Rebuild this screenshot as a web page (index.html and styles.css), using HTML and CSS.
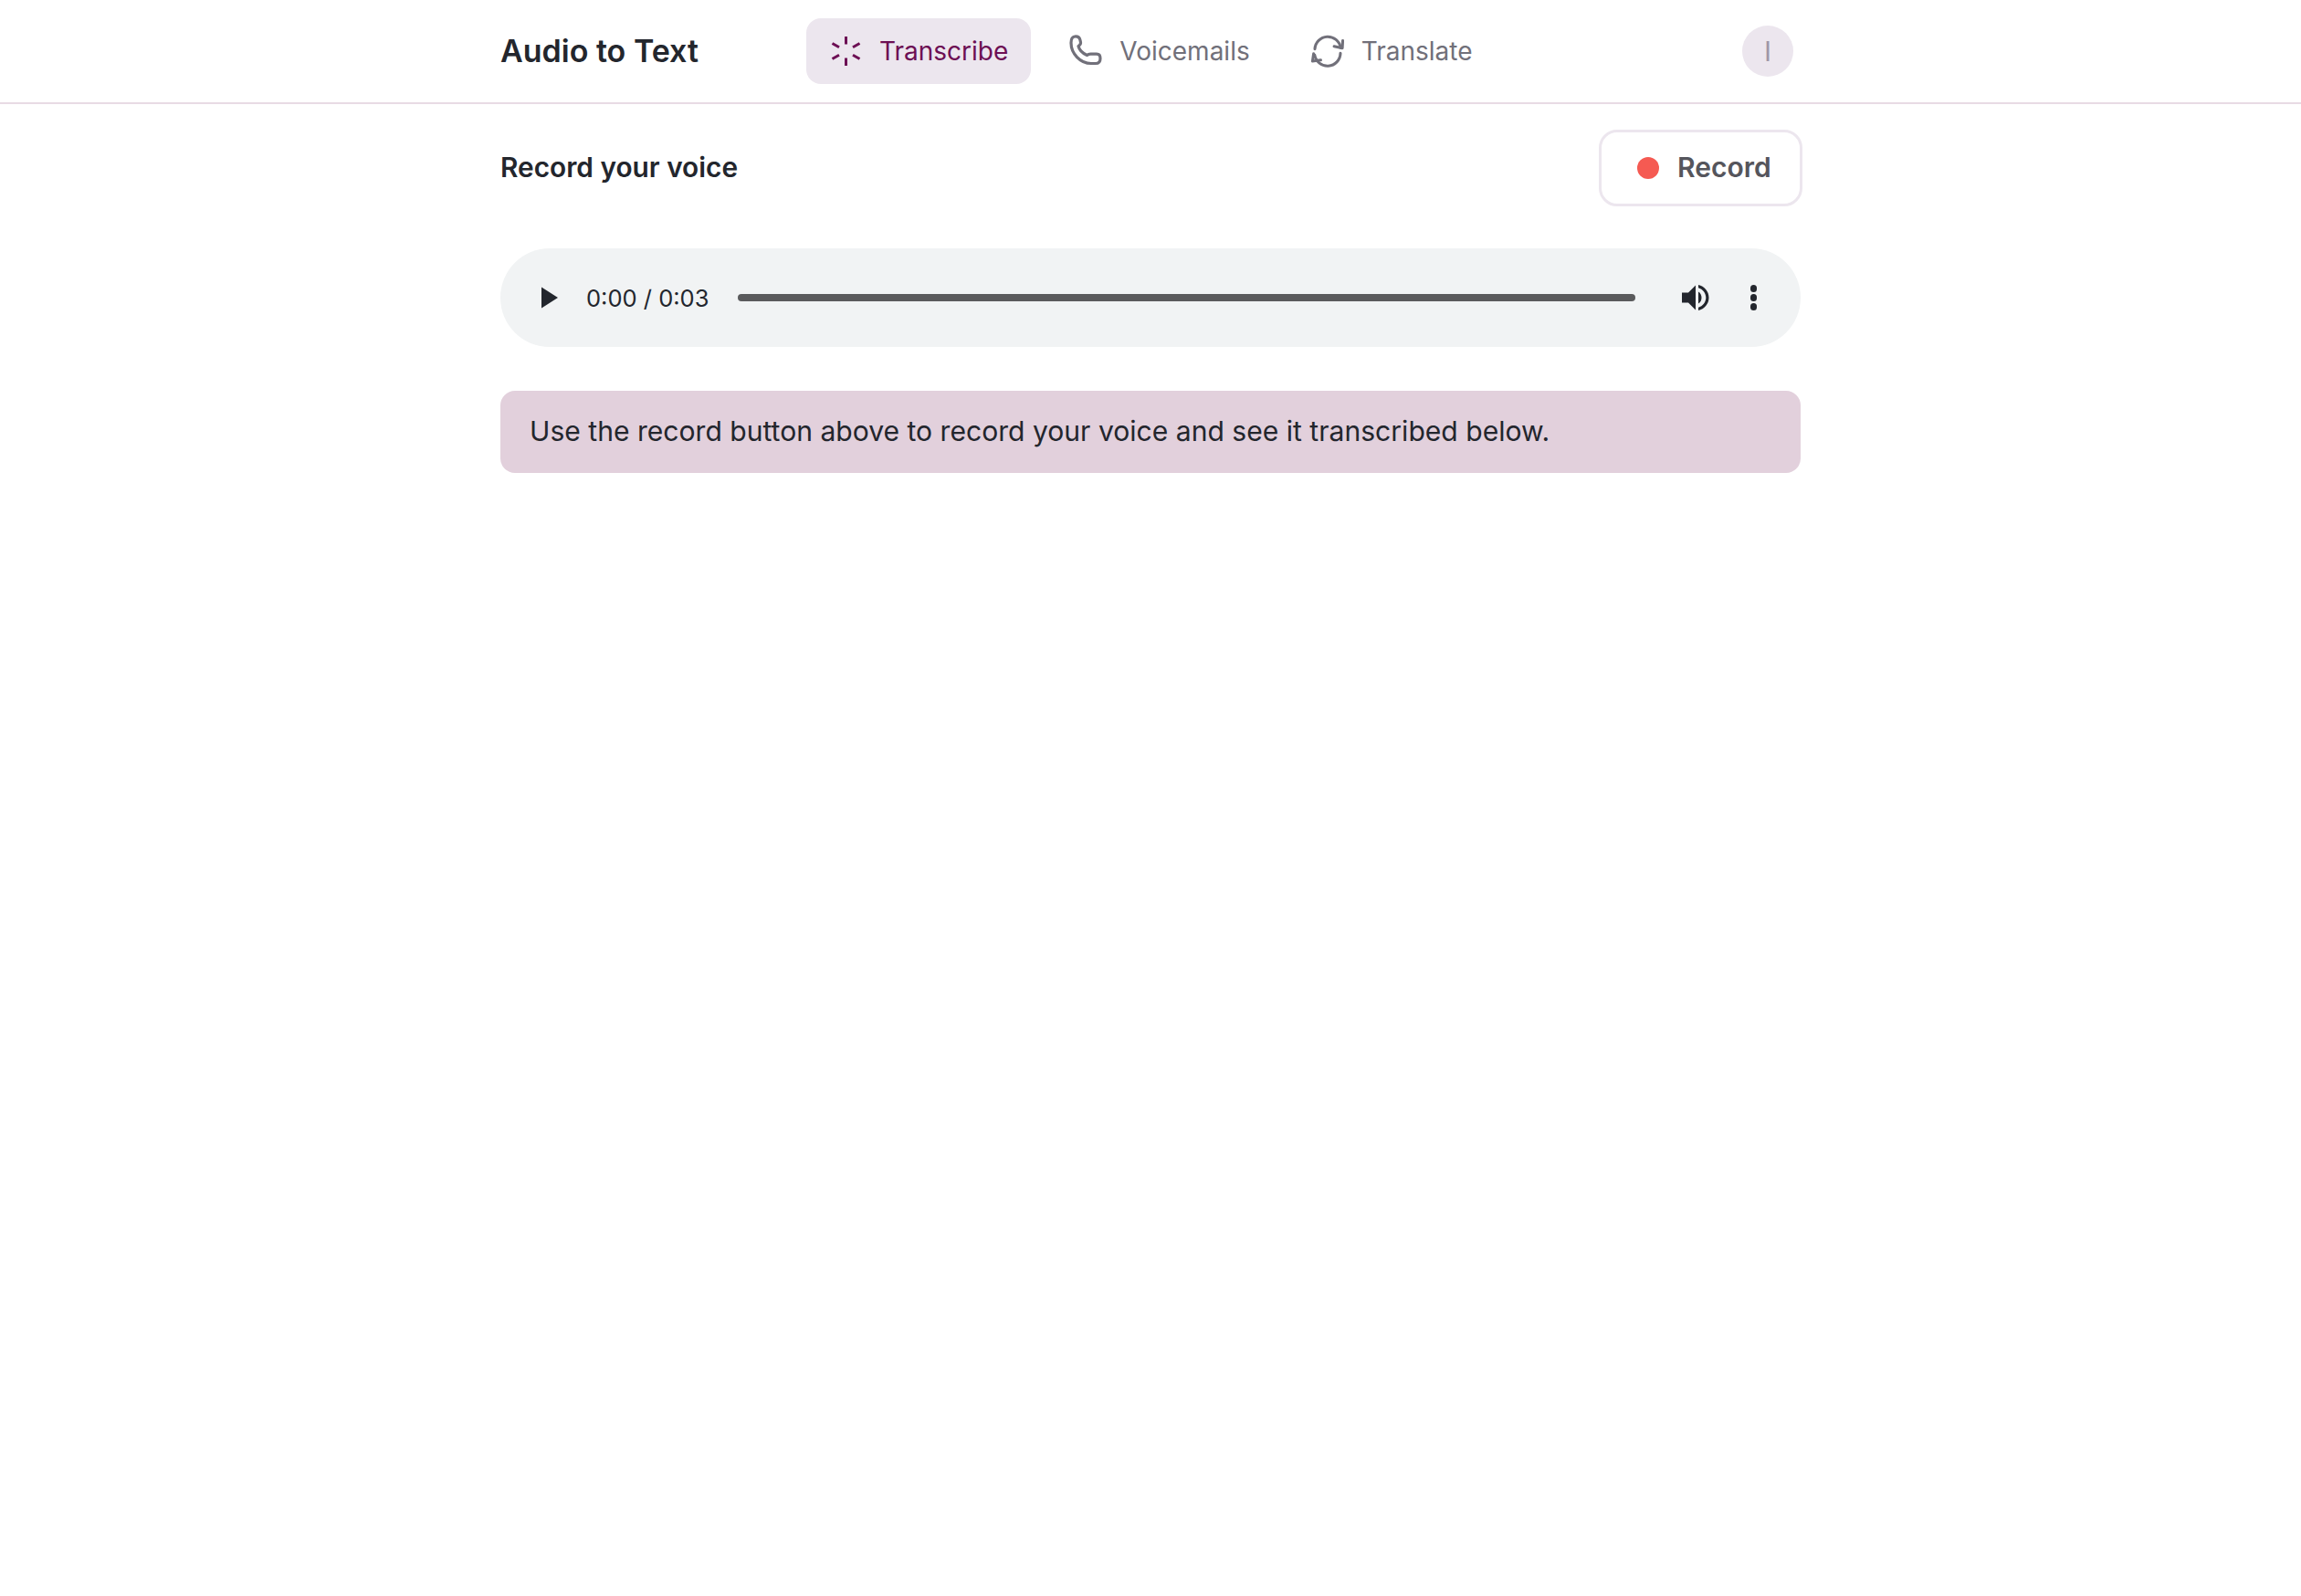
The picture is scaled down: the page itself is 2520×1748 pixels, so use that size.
FILE: index.html
```html
<!DOCTYPE html>
<html lang="en">
<head>
  <meta charset="UTF-8">
  <title>Audio to Text</title>
  <link rel="stylesheet" href="styles.css">
</head>
<body>

  <header class="topbar">
    <div class="topbar-inner">
      <div class="brand">Audio to Text</div>
      <nav class="nav">
        <a class="nav-item active">
          <svg class="nav-icon" viewBox="0 0 36 36" fill="none" stroke="currentColor" stroke-width="3">
            <path d="M18.500 2v8.500M18.500 25.500v8.500M3.500 9.500l7.500 4.300M26 22.200l7.500 4.300M3.500 26.500l7.500-4.300M26 13.800l7.500-4.300"/>
          </svg>
          <span>Transcribe</span>
        </a>
        <a class="nav-item">
          <svg class="nav-icon" viewBox="0 0 36 36" fill="none" stroke="currentColor" stroke-width="3.200" stroke-linejoin="round">
            <path d="M2 9C2 4.500 3.500 1.800 7 1.800C10 1.800 11.500 3.500 12 6L12.500 8.500C12.800 10.500 11.500 11.500 10 12.500C11 16.500 15 20.500 19.500 22.500C21 21 22.500 20.800 25 21.200H30C33 21.200 34 23.500 34 26C34 29.500 32.500 31.500 29 31.500H24C12 31.500 2 20.500 2 9Z"/>
          </svg>
          <span>Voicemails</span>
        </a>
        <a class="nav-item">
          <svg class="nav-icon" viewBox="0 0 38 36" fill="none" stroke="currentColor" stroke-width="3.200" stroke-linecap="round" stroke-linejoin="round">
            <path d="M4.200 15.500A15 15 0 0 1 34 14"/>
            <path d="M36.500 5.800L36 14.500L26.500 12.500"/>
            <path d="M33.800 20.500A15 15 0 0 1 4 22.500"/>
            <path d="M2.800 21L1.500 29.500L11 28.300"/>
          </svg>
          <span>Translate</span>
        </a>
      </nav>
      <div class="avatar">I</div>
    </div>
  </header>

  <main class="content">
    <div class="record-row">
      <h2 class="record-title">Record your voice</h2>
      <button class="btn-record"><span class="record-dot"></span><span class="record-label">Record</span></button>
    </div>

    <div class="player">
      <svg class="play-icon" viewBox="0 0 18 24"><path d="M0 0.500L18 12L0 23.500Z"/></svg>
      <span class="player-time">0:00 / 0:03</span>
      <div class="player-track"></div>
      <svg class="volume-icon" viewBox="0 0 30 30">
        <path d="M0 9.500H7L15 1.500V28.500L7 20.500H0Z"/>
        <path d="M18 8.500C20.500 10 21.500 12.500 21.500 15C21.500 17.500 20.500 20 18 21.500Z"/>
        <path d="M18 1C24.500 2.500 29.500 8 29.500 15C29.500 22 24.500 27.500 18 29V25.800C22.800 24.300 26.300 20 26.300 15C26.300 10 22.800 5.700 18 4.200Z"/>
      </svg>
      <div class="player-more"><i></i><i></i><i></i></div>
    </div>

    <div class="notice">Use the record button above to record your voice and see it transcribed below.</div>
  </main>

</body>
</html>
```

FILE: styles.css
```css
* {
  box-sizing: border-box;
}
body {
  margin: 0;
  background: #fff;
  color: #23262d;
  font-family: Inter, "Liberation Sans", sans-serif;
}
.topbar {
  height: 114px;
  border-bottom: 2px solid #e8dbe4;
}
.topbar-inner {
  width: 1424px;
  height: 112px;
  margin: 0 auto;
  display: flex;
  align-items: center;
}
.brand {
  width: 335px;
  padding-bottom: 1px;
  font-size: 34px;
  font-weight: 600;
}
.nav {
  display: flex;
  gap: 17px;
}
.nav-item {
  height: 72px;
  padding: 0 25px;
  display: flex;
  align-items: center;
  gap: 19px;
  border-radius: 16px;
  color: #71707a;
  font-size: 28px;
}
.nav-item.active {
  background: #ece6ee;
  color: #6d0f54;
}
.nav-icon {
  width: 36px;
  height: 36px;
  flex: none;
}
.avatar {
  width: 56px;
  height: 56px;
  margin-left: auto;
  margin-right: 8px;
  display: flex;
  align-items: center;
  justify-content: center;
  border-radius: 50%;
  background: #ece6ee;
  color: #a096a6;
  font-size: 30px;
}
.content {
  width: 1424px;
  margin: 0 auto;
  padding-top: 28px;
}
.record-row {
  display: flex;
  align-items: center;
  justify-content: space-between;
  margin-bottom: 46px;
}
.record-title {
  margin: 0 0 2px;
  font-size: 29.800px;
  font-weight: 600;
}
.btn-record {
  width: 223px;
  height: 84px;
  margin-right: -2px;
  padding: 0 0 0 39px;
  display: flex;
  align-items: center;
  gap: 20px;
  background: #fff;
  border: 3px solid #ece6ee;
  border-radius: 20px;
  color: #55555c;
  font-family: inherit;
  font-size: 30px;
  font-weight: 600;
}
.record-label {
  padding-bottom: 2px;
}
.record-dot {
  width: 24px;
  height: 24px;
  border-radius: 50%;
  background: #f55a52;
}
.player {
  height: 108px;
  padding: 0 48px 0 45px;
  display: flex;
  align-items: center;
  background: #f1f3f4;
  border-radius: 54px;
}
.play-icon {
  width: 18px;
  height: 24px;
  fill: #23262d;
}
.player-time {
  margin-left: 31px;
  font-size: 25.500px;
}
.player-track {
  flex: 1;
  height: 8px;
  margin: 0 51px 0 32px;
  background: #5a5a5c;
  border-radius: 4px;
}
.volume-icon {
  width: 30px;
  height: 30px;
  fill: #23262d;
}
.player-more {
  margin-left: 45px;
  display: flex;
  flex-direction: column;
  gap: 2.500px;
}
.player-more i {
  width: 7.500px;
  height: 7.500px;
  border-radius: 50%;
  background: #23262d;
}
.notice {
  margin-top: 48px;
  padding: 23px 32px 25px;
  background: #e2d0dc;
  border-radius: 16px;
  font-size: 30.100px;
  line-height: 42px;
}
```
